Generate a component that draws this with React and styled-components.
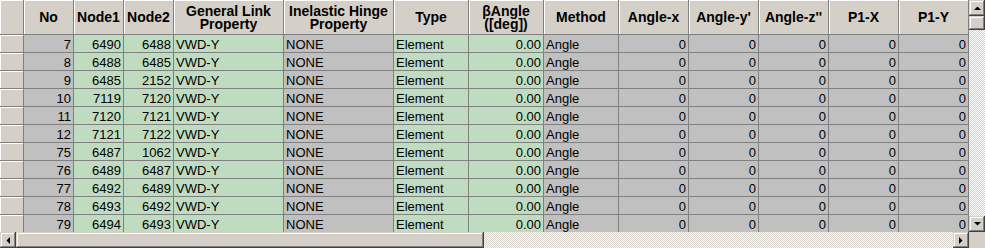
import React from "react";
import styled, { createGlobalStyle } from "styled-components";

const GlobalStyle = createGlobalStyle`
  body {
    margin: 0;
    background: #d4d0c8;
  }
`;

const FACE = "#d4d0c8";
const LINE = "#808080";

const tones = {
  grey: "#c0c0c0",
  green: "#c0dcc0",
};

const Frame = styled.div`
  display: grid;
  grid-template-columns: 969px 16px;
  grid-template-rows: 232px 16px;
  width: 985px;
  height: 248px;
  overflow: hidden;
  font-family: "Liberation Sans", Arial, sans-serif;
  color: #000;
`;

const Sheet = styled.div`
  overflow: hidden;
  background: ${FACE};
`;

const HeaderRow = styled.div`
  display: flex;
  height: 35px;
`;

const HeadCell = styled.div`
  flex: none;
  box-sizing: border-box;
  width: ${({ w }) => w}px;
  display: flex;
  align-items: center;
  justify-content: center;
  text-align: center;
  white-space: pre;
  overflow: visible;
  background: ${FACE};
  border-right: 1px solid ${LINE};
  border-bottom: 1px solid ${LINE};
  box-shadow: inset 1px 1px 0 #fff;
  font-size: 14px;
  font-weight: bold;
  line-height: 13px;
  padding-top: 1px;
`;

const Row = styled.div`
  display: flex;
  height: 18px;
`;

const RowHead = styled.div`
  flex: none;
  box-sizing: border-box;
  width: 24px;
  background: ${FACE};
  border-right: 1px solid ${LINE};
  border-bottom: 1px solid ${LINE};
  box-shadow: inset 1px 1px 0 #fff;
`;

const Cell = styled.div`
  flex: none;
  box-sizing: border-box;
  width: ${({ w }) => w}px;
  background: ${({ tone }) => tones[tone]};
  border-right: 1px solid ${LINE};
  border-bottom: 1px solid ${LINE};
  text-align: ${({ align }) => align};
  padding: 3px 2px 0 2px;
  font-size: 13px;
  line-height: 14px;
  white-space: nowrap;
  overflow: hidden;
`;

const Track = styled.div`
  display: flex;
  flex-direction: ${({ vertical }) => (vertical ? "column" : "row")};
  background: repeating-conic-gradient(#fff 0 25%, ${FACE} 0 50%) 0 0 / 2px 2px;
`;

const Raised = styled.div`
  flex: none;
  box-sizing: border-box;
  width: ${({ w }) => (w ? `${w}px` : "16px")};
  height: ${({ h }) => (h ? `${h}px` : "16px")};
  display: flex;
  align-items: center;
  justify-content: center;
  background: ${FACE};
  box-shadow: inset -1px -1px 0 #404040, inset 1px 1px 0 ${FACE},
    inset -2px -2px 0 ${LINE}, inset 2px 2px 0 #fff;
`;

const Spacer = styled.div`
  flex: 1;
`;

const Corner = styled.div`
  background: ${FACE};
`;

const Arrow = ({ dir }) => {
  const shapes = {
    up: "0,4 7,4 3.5,0.5",
    down: "0,0 7,0 3.5,3.5",
    left: "4,0 4,7 0.5,3.5",
    right: "0,0 0,7 3.5,3.5",
  };
  const wide = dir === "up" || dir === "down";
  return (
    <svg width={wide ? 7 : 4} height={wide ? 4 : 7} viewBox={wide ? "0 0 7 4" : "0 0 4 7"}>
      <polygon points={shapes[dir]} fill="#000" />
    </svg>
  );
};

const columns = [
  { key: "no", label: "No", w: 50, tone: "grey", align: "right" },
  { key: "n1", label: "Node1", w: 50, tone: "green", align: "right" },
  { key: "n2", label: "Node2", w: 50, tone: "green", align: "right" },
  { key: "link", label: "General Link\nProperty", w: 110, tone: "green", align: "left" },
  { key: "hinge", label: "Inelastic Hinge\nProperty", w: 110, tone: "grey", align: "left" },
  { key: "type", label: "Type", w: 75, tone: "green", align: "left" },
  { key: "beta", label: "βAngle\n([deg])", w: 75, tone: "green", align: "right" },
  { key: "method", label: "Method", w: 75, tone: "grey", align: "left" },
  { key: "ax", label: "Angle-x", w: 70, tone: "grey", align: "right" },
  { key: "ay", label: "Angle-y'", w: 70, tone: "grey", align: "right" },
  { key: "az", label: "Angle-z''", w: 70, tone: "grey", align: "right" },
  { key: "p1x", label: "P1-X", w: 70, tone: "grey", align: "right" },
  { key: "p1y", label: "P1-Y", w: 70, tone: "grey", align: "right" },
];

const links = [
  [7, 6490, 6488],
  [8, 6488, 6485],
  [9, 6485, 2152],
  [10, 7119, 7120],
  [11, 7120, 7121],
  [12, 7121, 7122],
  [75, 6487, 1062],
  [76, 6489, 6487],
  [77, 6492, 6489],
  [78, 6493, 6492],
  [79, 6494, 6493],
];

const rows = links.map(([no, n1, n2]) => ({
  no,
  n1,
  n2,
  link: "VWD-Y",
  hinge: "NONE",
  type: "Element",
  beta: "0.00",
  method: "Angle",
  ax: 0,
  ay: 0,
  az: 0,
  p1x: 0,
  p1y: 0,
}));

const App = () => (
  <>
    <GlobalStyle />
    <Frame>
      <Sheet>
        <HeaderRow>
          <HeadCell w={24} />
          {columns.map((c) => (
            <HeadCell key={c.key} w={c.w}>
              {c.label}
            </HeadCell>
          ))}
        </HeaderRow>
        {rows.map((r) => (
          <Row key={r.no}>
            <RowHead />
            {columns.map((c) => (
              <Cell key={c.key} w={c.w} tone={c.tone} align={c.align}>
                {r[c.key]}
              </Cell>
            ))}
          </Row>
        ))}
      </Sheet>

      <Track vertical>
        <Raised>
          <Arrow dir="up" />
        </Raised>
        <Raised h={14} />
        <Spacer />
        <Raised>
          <Arrow dir="down" />
        </Raised>
      </Track>

      <Track>
        <Raised>
          <Arrow dir="left" />
        </Raised>
        <Raised w={468} />
        <Spacer />
        <Raised>
          <Arrow dir="right" />
        </Raised>
      </Track>
      <Corner />
    </Frame>
  </>
);

export default App;
